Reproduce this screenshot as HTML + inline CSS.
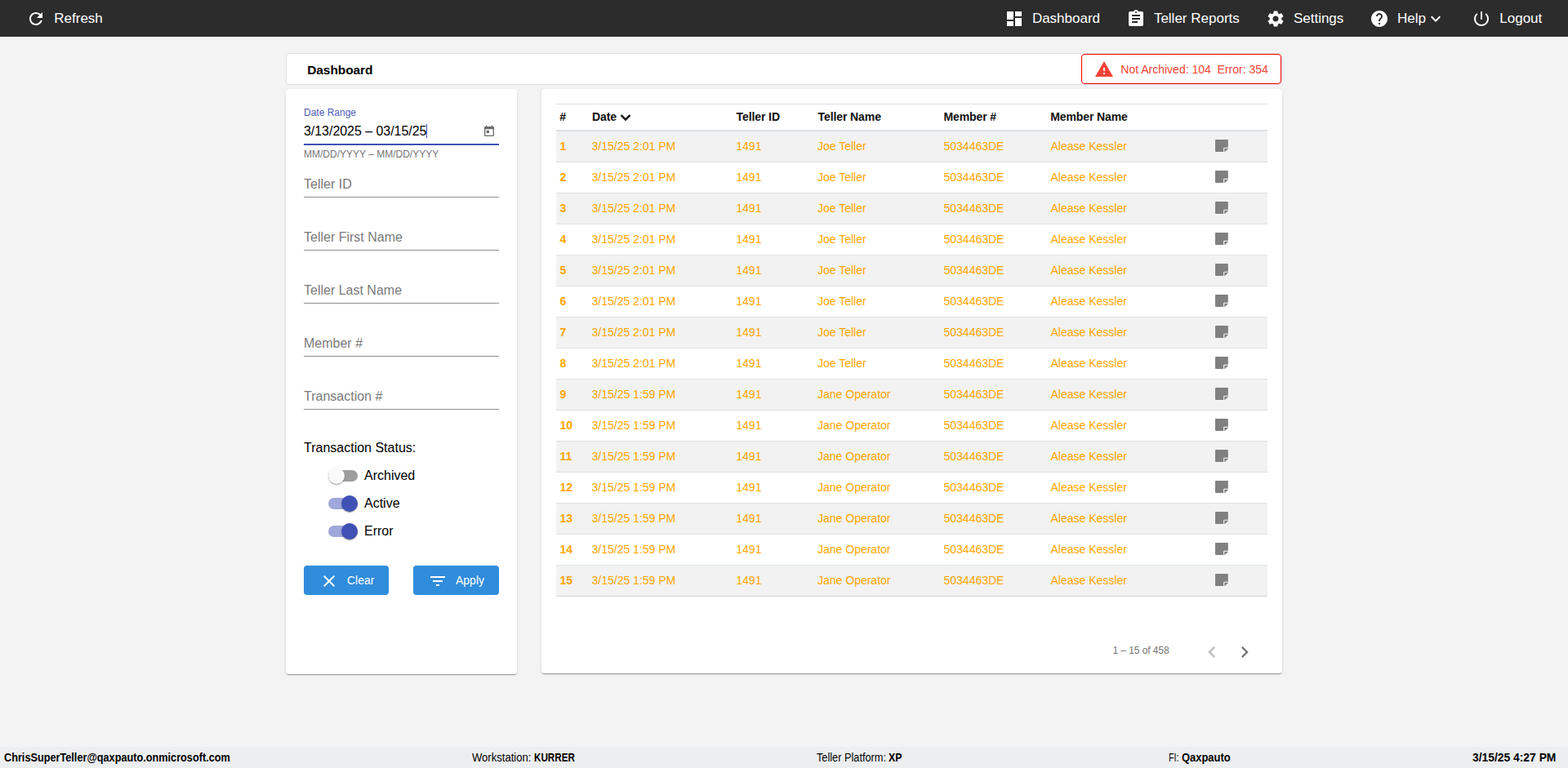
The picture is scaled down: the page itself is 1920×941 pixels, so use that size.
<!DOCTYPE html>
<html lang="en"><head><meta charset="utf-8"><title>Dashboard</title>
<style>
*{box-sizing:border-box;margin:0;padding:0}
html,body{width:1920px;height:941px;overflow:hidden;background:#f3f3f3;font-family:"Liberation Sans",Arial,sans-serif;color:#000}
svg{display:block;fill:currentColor}
.abs{position:absolute}
header{position:absolute;left:0;top:0;width:1920px;height:45px;background:#2c2c2c;color:#fff}
.nav{position:absolute;top:0;height:45px;display:flex;align-items:center;font-size:17px;white-space:nowrap}
.nav svg{width:24px;height:24px;margin-right:10.3px;flex:none}
.nav svg.chev{margin:0.5px 0 0 0.2px}
.titlebar{position:absolute;left:350px;top:65px;width:1220px;height:39px;background:#fff;border:1px solid #e0e0e0;border-radius:4px}
.titlebar h1{position:absolute;left:25.2px;top:10px;font-size:15.5px;font-weight:bold;line-height:20px;letter-spacing:-0.08px}
.alert{position:absolute;left:1324px;top:66px;width:245px;height:37px;border:1px solid #f00;border-radius:4px;background:#fff;color:#f44336;font-size:14px}
.alert svg{position:absolute;left:15.4px;top:6px;width:24px;height:24px}
.alert span{position:absolute;left:47.3px;top:10px;line-height:16px;white-space:pre}
.card{position:absolute;background:#fff;border-radius:4px;box-shadow:0 2px 1px -1px rgba(0,0,0,.2),0 1px 1px 0 rgba(0,0,0,.14),0 1px 3px 0 rgba(0,0,0,.12)}
#filters{left:350px;top:109px;width:283px;height:717px}
#results{left:663px;top:109px;width:907px;height:716px}
.field{position:absolute;left:22px;width:239px;background:#8f8f8f;height:1px}
.ph{position:absolute;left:22px;font-size:16px;color:#7a7a7a;line-height:20px;white-space:nowrap}
table{position:absolute;left:18px;top:18px;width:871px;border-collapse:separate;border-spacing:0;font-size:14px;table-layout:fixed}
th{height:34px;text-align:left;font-weight:bold;color:#111;border-top:1px solid #dee2e6;border-bottom:2px solid #dee2e6;padding:0 0 1px 5.2px;white-space:nowrap;position:relative;letter-spacing:-0.1px}
th:nth-child(1){padding-left:4.3px}th:nth-child(2){padding-left:5.1px}th:nth-child(3),th:nth-child(4){padding-left:5.6px}th:nth-child(5){padding-left:5.5px}
td:nth-child(3){padding-left:5.3px}td:nth-child(4){padding-left:5px}td:nth-child(5),td:nth-child(6){padding-left:5.5px}
td{height:38px;color:#ffa500;border-bottom:1px solid #dee2e6;padding:0 0 2px 4.5px;white-space:nowrap}
tbody tr:nth-child(odd) td{background:#f2f2f2}
td.c0{font-weight:bold}
tbody tr:last-child td{border-bottom-color:#d3d3d3}
td.c6{padding:0 0 2px 7.3px}
.note{width:15.8px;height:17.14px;color:#808080;margin-top:1px}
.sw{position:absolute;left:52px;width:36px;height:14px;border-radius:7px}
.sw i{position:absolute;top:-3px;width:20px;height:20px;border-radius:50%;box-shadow:0 2px 1px -1px rgba(0,0,0,.2),0 1px 1px 0 rgba(0,0,0,.14),0 1px 3px 0 rgba(0,0,0,.12)}
.sw.off{background:#9e9e9e} .sw.off i{left:0;background:#fafafa}
.sw.on{background:#9fa8da} .sw.on i{left:16px;background:#3f51b5}
.swl{position:absolute;left:96px;font-size:16px;line-height:20px}
.btn{position:absolute;top:584px;height:36px;background:#308ddc;color:#fff;border-radius:4px;font-size:14px}
.btn svg{position:absolute;top:7px;width:24px;height:24px}
.btn span{position:absolute;top:10px;line-height:16px}
footer{position:absolute;left:0;top:915px;width:1920px;height:26px;background:#edeef0;font-size:14px}
footer span{position:absolute;top:5px;line-height:16px;white-space:nowrap;display:inline-block;transform-origin:0 50%}
footer b{font-weight:bold}
</style></head>
<body>
<header>
 <div class="nav" style="left:32px"><svg viewBox="0 0 24 24"><path d="M17.65 6.35C16.2 4.9 14.21 4 12 4c-4.42 0-7.99 3.58-7.990 8s3.570 8 7.990 8c3.730 0 6.840-2.550 7.730-6h-2.080c-.82 2.330-3.040 4-5.650 4-3.310 0-6-2.690-6-6s2.690-6 6-6c1.660 0 3.140.69 4.220 1.780L13 11h7V4l-2.350 2.350z"/></svg>Refresh</div>
 <div class="nav" style="left:1229.6px"><svg viewBox="0 0 24 24"><path d="M3 13h8V3H3v10zm0 8h8v-6H3v6zm10 0h8V11h-8v10zm0-18v6h8V3h-8z"/></svg>Dashboard</div>
 <div class="nav" style="left:1378.6px"><svg viewBox="0 0 24 24"><path d="M19 3h-4.180C14.4 1.840 13.3 1 12 1c-1.300 0-2.400.84-2.820 2H5c-1.100 0-2 .9-2 2v14c0 1.100.9 2 2 2h14c1.100 0 2-.9 2-2V5c0-1.100-.9-2-2-2zm-7 0c.55 0 1 .45 1 1s-.45 1-1 1-1-.45-1-1 .45-1 1-1zm2 14H7v-2h7v2zm3-4H7v-2h10v2zm0-4H7V7h10v2z"/></svg>Teller Reports</div>
 <div class="nav" style="left:1549.6px"><svg viewBox="0 0 24 24"><path d="M19.14 12.94c.04-.3.06-.61.06-.94 0-.32-.02-.64-.07-.94l2.030-1.580c.18-.14.23-.41.12-.61l-1.920-3.320c-.12-.22-.37-.29-.59-.22l-2.390.96c-.5-.38-1.030-.7-1.620-.94l-.36-2.540c-.04-.24-.24-.41-.48-.41h-3.840c-.24 0-.43.17-.47.41l-.36 2.540c-.59.24-1.130.57-1.620.94l-2.390-.96c-.22-.08-.47 0-.59.22L2.740 8.870c-.12.21-.08.47.12.61l2.030 1.580c-.05.3-.09.63-.09.94s.02.64.07.94l-2.030 1.580c-.18.14-.23.41-.12.61l1.920 3.320c.12.22.37.29.59.22l2.390-.96c.5.38 1.030.7 1.620.94l.36 2.540c.05.24.24.41.48.41h3.840c.24 0 .44-.17.47-.41l.36-2.540c.59-.24 1.130-.56 1.620-.94l2.390.96c.22.08.47 0 .59-.22l1.920-3.320c.12-.22.07-.47-.12-.61l-2.010-1.580zM12 15.600c-1.980 0-3.600-1.620-3.600-3.600s1.620-3.600 3.600-3.600 3.600 1.620 3.600 3.600-1.620 3.600-3.600 3.600z"/></svg>Settings</div>
 <div class="nav" style="left:1676.8px"><svg viewBox="0 0 24 24"><path d="M12 2C6.480 2 2 6.480 2 12s4.480 10 10 10 10-4.480 10-10S17.520 2 12 2zm1 17h-2v-2h2v2zm2.070-7.750l-.9.92C13.450 12.900 13 13.500 13 15h-2v-.5c0-1.100.45-2.100 1.170-2.830l1.240-1.260c.37-.36.59-.86.59-1.410 0-1.100-.9-2-2-2s-2 .9-2 2H8c0-2.210 1.790-4 4-4s4 1.790 4 4c0 .88-.36 1.680-.93 2.250z"/></svg>Help<svg class="chev" viewBox="0 0 24 24"><path d="M16.59 8.590L12 13.170 7.410 8.590 6 10l6 6 6-6z"/></svg></div>
 <div class="nav" style="left:1802px"><svg viewBox="0 0 24 24"><path d="M13 3h-2v10h2V3zm4.830 2.170l-1.420 1.420C17.990 7.860 19 9.810 19 12c0 3.870-3.130 7-7 7s-7-3.130-7-7c0-2.190 1.010-4.140 2.580-5.420L6.170 5.170C4.230 6.820 3 9.260 3 12c0 4.970 4.030 9 9 9s9-4.030 9-9c0-2.740-1.230-5.180-3.170-6.830z"/></svg>Logout</div>
</header>

<div class="titlebar"><h1>Dashboard</h1></div>
<div class="alert"><svg viewBox="0 0 24 24"><path d="M1 21h22L12 2 1 21zm12-3h-2v-2h2v2zm0-4h-2v-4h2v4z"/></svg><span>Not Archived: 104  Error: 354</span></div>

<section class="card" id="filters">
 <div class="abs" style="left:22px;top:22px;font-size:12px;line-height:14px;color:#4c5cba">Date Range</div>
 <div class="abs" style="left:22px;top:41.5px;font-size:16px;line-height:20px;white-space:nowrap;letter-spacing:-0.04px">3/13/2025 – 03/15/25</div>
 <div class="abs" style="left:172px;top:43px;width:1px;height:17px;background:#3f51b5"></div>
 <svg class="abs" style="left:241px;top:44px;width:16px;height:16px;color:#6b6b6b" viewBox="0 0 24 24"><path d="M19 3h-1V1h-2v2H8V1H6v2H5c-1.110 0-1.990.9-1.990 2L3 19c0 1.100.89 2 2 2h14c1.100 0 2-.9 2-2V5c0-1.100-.9-2-2-2zm0 16H5V8h14v11zM7 10h5v5H7z"/></svg>
 <div class="field" style="top:67px;height:2px;background:#3f51b5"></div>
 <div class="abs" style="left:22px;top:73px;font-size:12px;line-height:14px;color:#757575;white-space:nowrap">MM/DD/YYYY – MM/DD/YYYY</div>
 <div class="ph" style="top:107px">Teller ID</div><div class="field" style="top:132px"></div>
 <div class="ph" style="top:172px">Teller First Name</div><div class="field" style="top:197px"></div>
 <div class="ph" style="top:237px">Teller Last Name</div><div class="field" style="top:262px"></div>
 <div class="ph" style="top:302px">Member #</div><div class="field" style="top:327px"></div>
 <div class="ph" style="top:367px">Transaction #</div><div class="field" style="top:392px"></div>
 <div class="abs" style="left:22px;top:430px;font-size:16px;line-height:20px">Transaction Status:</div>
 <div class="sw off" style="top:467px"><i></i></div><div class="swl" style="top:464px">Archived</div>
 <div class="sw on" style="top:501px"><i></i></div><div class="swl" style="top:498px">Active</div>
 <div class="sw on" style="top:535px"><i></i></div><div class="swl" style="top:532px">Error</div>
 <div class="btn" style="left:22px;width:104px"><svg style="left:19px" viewBox="0 0 24 24"><path d="M19 6.410L17.590 5 12 10.590 6.410 5 5 6.410 10.590 12 5 17.590 6.410 19 12 13.410 17.590 19 19 17.590 13.410 12z"/></svg><span style="left:53px">Clear</span></div>
 <div class="btn" style="left:156px;width:105px"><svg style="left:18.2px" viewBox="0 0 24 24"><path d="M10 18h4v-2h-4v2zM3 6v2h18V6H3zm3 7h12v-2H6v2z"/></svg><span style="left:52px">Apply</span></div>
</section>

<section class="card" id="results">
 <table>
  <colgroup><col style="width:39px"><col style="width:176px"><col style="width:100px"><col style="width:154px"><col style="width:131px"><col style="width:200px"><col></colgroup>
  <thead><tr><th>#</th><th>Date<svg class="abs" style="left:34.2px;top:3.6px;width:24px;height:24px;color:#1c1c1c" viewBox="0 0 24 24"><path d="M16.59 8.590L12 13.170 7.410 8.590 6 10l6 6 6-6z" stroke="currentColor" stroke-width="0.7"/></svg></th><th>Teller ID</th><th>Teller Name</th><th>Member #</th><th>Member Name</th><th></th></tr></thead>
  <tbody>
<tr><td class="c0">1</td><td>3/15/25 2:01 PM</td><td>1491</td><td>Joe Teller</td><td>5034463DE</td><td>Alease Kessler</td><td class="c6"><svg class="note" viewBox="0 0 448 512" preserveAspectRatio="none"><path d="M312 320h136V56c0-13.3-10.700-24-24-24H24C10.700 32 0 42.700 0 56v400c0 13.300 10.700 24 24 24h264V344c0-13.200 10.800-24 24-24zm129 55l-98 98c-4.500 4.500-10.600 7-17 7h-6V352h128v6.100c0 6.300-2.500 12.400-7 16.900z"/></svg></td></tr>
<tr><td class="c0">2</td><td>3/15/25 2:01 PM</td><td>1491</td><td>Joe Teller</td><td>5034463DE</td><td>Alease Kessler</td><td class="c6"><svg class="note" viewBox="0 0 448 512" preserveAspectRatio="none"><path d="M312 320h136V56c0-13.3-10.700-24-24-24H24C10.700 32 0 42.700 0 56v400c0 13.300 10.700 24 24 24h264V344c0-13.200 10.800-24 24-24zm129 55l-98 98c-4.500 4.500-10.600 7-17 7h-6V352h128v6.100c0 6.300-2.500 12.400-7 16.900z"/></svg></td></tr>
<tr><td class="c0">3</td><td>3/15/25 2:01 PM</td><td>1491</td><td>Joe Teller</td><td>5034463DE</td><td>Alease Kessler</td><td class="c6"><svg class="note" viewBox="0 0 448 512" preserveAspectRatio="none"><path d="M312 320h136V56c0-13.3-10.700-24-24-24H24C10.700 32 0 42.700 0 56v400c0 13.300 10.700 24 24 24h264V344c0-13.200 10.800-24 24-24zm129 55l-98 98c-4.500 4.500-10.600 7-17 7h-6V352h128v6.100c0 6.300-2.500 12.400-7 16.900z"/></svg></td></tr>
<tr><td class="c0">4</td><td>3/15/25 2:01 PM</td><td>1491</td><td>Joe Teller</td><td>5034463DE</td><td>Alease Kessler</td><td class="c6"><svg class="note" viewBox="0 0 448 512" preserveAspectRatio="none"><path d="M312 320h136V56c0-13.3-10.700-24-24-24H24C10.700 32 0 42.700 0 56v400c0 13.300 10.700 24 24 24h264V344c0-13.200 10.800-24 24-24zm129 55l-98 98c-4.500 4.500-10.600 7-17 7h-6V352h128v6.100c0 6.300-2.500 12.400-7 16.900z"/></svg></td></tr>
<tr><td class="c0">5</td><td>3/15/25 2:01 PM</td><td>1491</td><td>Joe Teller</td><td>5034463DE</td><td>Alease Kessler</td><td class="c6"><svg class="note" viewBox="0 0 448 512" preserveAspectRatio="none"><path d="M312 320h136V56c0-13.3-10.700-24-24-24H24C10.700 32 0 42.700 0 56v400c0 13.300 10.700 24 24 24h264V344c0-13.200 10.800-24 24-24zm129 55l-98 98c-4.500 4.500-10.600 7-17 7h-6V352h128v6.100c0 6.300-2.500 12.400-7 16.900z"/></svg></td></tr>
<tr><td class="c0">6</td><td>3/15/25 2:01 PM</td><td>1491</td><td>Joe Teller</td><td>5034463DE</td><td>Alease Kessler</td><td class="c6"><svg class="note" viewBox="0 0 448 512" preserveAspectRatio="none"><path d="M312 320h136V56c0-13.3-10.700-24-24-24H24C10.700 32 0 42.700 0 56v400c0 13.300 10.700 24 24 24h264V344c0-13.200 10.800-24 24-24zm129 55l-98 98c-4.500 4.500-10.600 7-17 7h-6V352h128v6.100c0 6.300-2.500 12.400-7 16.900z"/></svg></td></tr>
<tr><td class="c0">7</td><td>3/15/25 2:01 PM</td><td>1491</td><td>Joe Teller</td><td>5034463DE</td><td>Alease Kessler</td><td class="c6"><svg class="note" viewBox="0 0 448 512" preserveAspectRatio="none"><path d="M312 320h136V56c0-13.3-10.700-24-24-24H24C10.700 32 0 42.700 0 56v400c0 13.300 10.700 24 24 24h264V344c0-13.200 10.800-24 24-24zm129 55l-98 98c-4.500 4.500-10.600 7-17 7h-6V352h128v6.100c0 6.300-2.500 12.400-7 16.900z"/></svg></td></tr>
<tr><td class="c0">8</td><td>3/15/25 2:01 PM</td><td>1491</td><td>Joe Teller</td><td>5034463DE</td><td>Alease Kessler</td><td class="c6"><svg class="note" viewBox="0 0 448 512" preserveAspectRatio="none"><path d="M312 320h136V56c0-13.3-10.700-24-24-24H24C10.700 32 0 42.700 0 56v400c0 13.300 10.700 24 24 24h264V344c0-13.200 10.800-24 24-24zm129 55l-98 98c-4.500 4.500-10.600 7-17 7h-6V352h128v6.100c0 6.300-2.500 12.400-7 16.900z"/></svg></td></tr>
<tr><td class="c0">9</td><td>3/15/25 1:59 PM</td><td>1491</td><td>Jane Operator</td><td>5034463DE</td><td>Alease Kessler</td><td class="c6"><svg class="note" viewBox="0 0 448 512" preserveAspectRatio="none"><path d="M312 320h136V56c0-13.3-10.700-24-24-24H24C10.700 32 0 42.700 0 56v400c0 13.300 10.700 24 24 24h264V344c0-13.200 10.800-24 24-24zm129 55l-98 98c-4.500 4.500-10.600 7-17 7h-6V352h128v6.100c0 6.300-2.500 12.400-7 16.900z"/></svg></td></tr>
<tr><td class="c0">10</td><td>3/15/25 1:59 PM</td><td>1491</td><td>Jane Operator</td><td>5034463DE</td><td>Alease Kessler</td><td class="c6"><svg class="note" viewBox="0 0 448 512" preserveAspectRatio="none"><path d="M312 320h136V56c0-13.3-10.700-24-24-24H24C10.700 32 0 42.700 0 56v400c0 13.300 10.700 24 24 24h264V344c0-13.200 10.800-24 24-24zm129 55l-98 98c-4.500 4.500-10.600 7-17 7h-6V352h128v6.100c0 6.300-2.500 12.400-7 16.900z"/></svg></td></tr>
<tr><td class="c0">11</td><td>3/15/25 1:59 PM</td><td>1491</td><td>Jane Operator</td><td>5034463DE</td><td>Alease Kessler</td><td class="c6"><svg class="note" viewBox="0 0 448 512" preserveAspectRatio="none"><path d="M312 320h136V56c0-13.3-10.700-24-24-24H24C10.700 32 0 42.700 0 56v400c0 13.300 10.700 24 24 24h264V344c0-13.200 10.800-24 24-24zm129 55l-98 98c-4.500 4.500-10.600 7-17 7h-6V352h128v6.100c0 6.300-2.500 12.400-7 16.900z"/></svg></td></tr>
<tr><td class="c0">12</td><td>3/15/25 1:59 PM</td><td>1491</td><td>Jane Operator</td><td>5034463DE</td><td>Alease Kessler</td><td class="c6"><svg class="note" viewBox="0 0 448 512" preserveAspectRatio="none"><path d="M312 320h136V56c0-13.3-10.700-24-24-24H24C10.700 32 0 42.700 0 56v400c0 13.300 10.700 24 24 24h264V344c0-13.200 10.800-24 24-24zm129 55l-98 98c-4.500 4.500-10.600 7-17 7h-6V352h128v6.100c0 6.300-2.500 12.400-7 16.900z"/></svg></td></tr>
<tr><td class="c0">13</td><td>3/15/25 1:59 PM</td><td>1491</td><td>Jane Operator</td><td>5034463DE</td><td>Alease Kessler</td><td class="c6"><svg class="note" viewBox="0 0 448 512" preserveAspectRatio="none"><path d="M312 320h136V56c0-13.3-10.700-24-24-24H24C10.700 32 0 42.700 0 56v400c0 13.300 10.700 24 24 24h264V344c0-13.200 10.800-24 24-24zm129 55l-98 98c-4.500 4.500-10.600 7-17 7h-6V352h128v6.100c0 6.300-2.500 12.400-7 16.900z"/></svg></td></tr>
<tr><td class="c0">14</td><td>3/15/25 1:59 PM</td><td>1491</td><td>Jane Operator</td><td>5034463DE</td><td>Alease Kessler</td><td class="c6"><svg class="note" viewBox="0 0 448 512" preserveAspectRatio="none"><path d="M312 320h136V56c0-13.3-10.700-24-24-24H24C10.700 32 0 42.700 0 56v400c0 13.300 10.700 24 24 24h264V344c0-13.200 10.800-24 24-24zm129 55l-98 98c-4.500 4.500-10.600 7-17 7h-6V352h128v6.100c0 6.300-2.500 12.400-7 16.900z"/></svg></td></tr>
<tr><td class="c0">15</td><td>3/15/25 1:59 PM</td><td>1491</td><td>Jane Operator</td><td>5034463DE</td><td>Alease Kessler</td><td class="c6"><svg class="note" viewBox="0 0 448 512" preserveAspectRatio="none"><path d="M312 320h136V56c0-13.3-10.700-24-24-24H24C10.700 32 0 42.700 0 56v400c0 13.300 10.700 24 24 24h264V344c0-13.200 10.800-24 24-24zm129 55l-98 98c-4.500 4.500-10.600 7-17 7h-6V352h128v6.100c0 6.300-2.500 12.400-7 16.900z"/></svg></td></tr>
  </tbody>
 </table>
 <div class="abs" style="left:699.5px;top:681px;font-size:12px;line-height:14px;color:#757575;white-space:nowrap;letter-spacing:-0.08px">1 – 15 of 458</div>
 <svg class="abs" style="left:807.3px;top:676.1px;width:28px;height:28px;color:#bdbdbd" viewBox="0 0 24 24"><path d="M15.41 7.410L14 6l-6 6 6 6 1.410-1.410L10.830 12z"/></svg>
 <svg class="abs" style="left:846.8px;top:676.1px;width:28px;height:28px;color:#757575" viewBox="0 0 24 24"><path d="M10 6L8.590 7.410 13.170 12l-4.580 4.590L10 18l6-6z"/></svg>
</section>

<footer>
 <span style="left:5.00px;transform:scaleX(0.9072);font-weight:bold">ChrisSuperTeller@qaxpauto.onmicrosoft.com</span>
 <span style="left:578.20px;transform:scaleX(0.9325)">Workstation:</span>
 <span style="left:654.00px;transform:scaleX(0.8333);font-weight:bold">KURRER</span>
 <span style="left:1000.00px;transform:scaleX(0.9097)">Teller Platform:</span>
 <span style="left:1088.30px;transform:scaleX(0.8789);font-weight:bold">XP</span>
 <span style="left:1430.93px;transform:scaleX(0.7667)">FI:</span>
 <span style="left:1447.10px;transform:scaleX(0.9242);font-weight:bold">Qaxpauto</span>
 <span style="left:1802.70px;transform:scaleX(0.9893);font-weight:bold">3/15/25 4:27 PM</span>
</footer>
</body></html>
